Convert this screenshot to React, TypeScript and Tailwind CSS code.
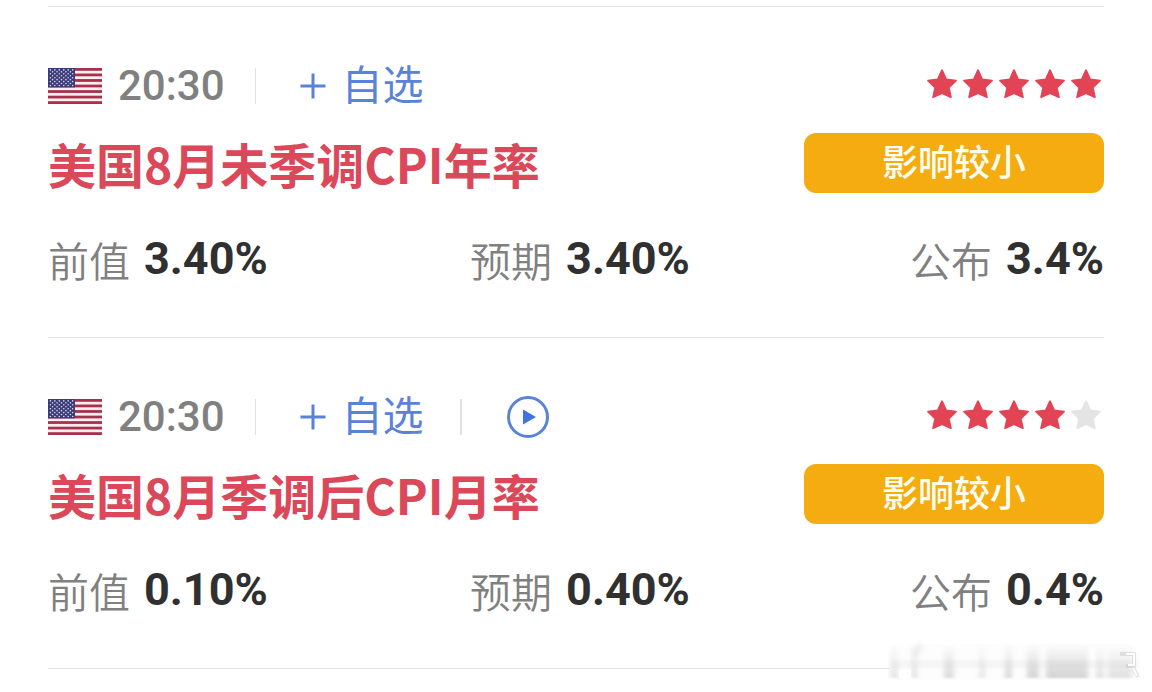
import clsx from "clsx";

type Indicator = {
  id: string;
  time: string;
  title: string;
  stars: number;
  impact: string;
  hasVideo: boolean;
  values: { label: string; value: string }[];
};

const INDICATORS: Indicator[] = [
  {
    id: "cpi-yoy",
    time: "20:30",
    title: "美国8月未季调CPI年率",
    stars: 5,
    impact: "影响较小",
    hasVideo: false,
    values: [
      { label: "前值", value: "3.40%" },
      { label: "预期", value: "3.40%" },
      { label: "公布", value: "3.4%" },
    ],
  },
  {
    id: "cpi-mom",
    time: "20:30",
    title: "美国8月季调后CPI月率",
    stars: 4,
    impact: "影响较小",
    hasVideo: true,
    values: [
      { label: "前值", value: "0.10%" },
      { label: "预期", value: "0.40%" },
      { label: "公布", value: "0.4%" },
    ],
  },
];

const MAX_STARS = 5;
const CELL_ALIGN = ["justify-start", "justify-center pl-2", "justify-end"];

const UsFlag = () => (
  <svg viewBox="0 0 54 36" className="h-9 w-[54px] shrink-0" aria-label="美国" role="img">
    <rect width="54" height="36" fill="#fbeef0" />
    {[0, 1, 2, 3, 4, 5, 6].map((i) => (
      <rect key={i} y={(i * 72) / 13} width="54" height={36 / 13} fill="#a5314b" />
    ))}
    <rect width="27" height="19.4" fill="#3a3b78" />
    {[0, 1, 2, 3, 4, 5, 6, 7, 8].map((row) =>
      Array.from({ length: row % 2 ? 5 : 6 }, (_, col) => (
        <circle
          key={`${row}-${col}`}
          cx={2.4 + col * 4.45 + (row % 2 ? 2.2 : 0)}
          cy={1.9 + row * 1.95}
          r="0.8"
          fill="#d5d8ee"
        />
      ))
    )}
  </svg>
);

const Star = ({ filled }: { filled: boolean }) => (
  <svg
    viewBox="0 0 36 36"
    className={clsx("size-9", filled ? "text-[#e24456]" : "text-[#e4e4e4]")}
    aria-hidden="true"
  >
    <path
      d="M18 4.2 22.2 13.3 32 14.6 24.8 21.6 26.9 31.2 18 27.1 9.1 31.2 11.2 21.6 4 14.6 13.8 13.3Z"
      fill="currentColor"
      stroke="currentColor"
      strokeWidth="1.8"
      strokeLinejoin="round"
    />
  </svg>
);

const IndicatorRow = ({ item }: { item: Indicator }) => (
  <article className="border-t border-[#e3e3e3] pt-[55px] pb-12">
    <div className="flex h-12 items-center justify-between">
      <div className="flex items-center">
        <UsFlag />
        <time className="ml-4 font-[Roboto,sans-serif] text-[42px] leading-[48px] font-medium text-[#808080]">
          {item.time}
        </time>
        <span className="ml-[30px] h-9 w-px bg-[#e0e0e0]" />
        <button type="button" className="ml-11 flex items-center gap-4 text-[#5b82d9]">
          <svg viewBox="0 0 26 26" className="size-[26px]" aria-hidden="true">
            <path d="M13 0.5v25M0.5 13h25" stroke="currentColor" strokeWidth="3" />
          </svg>
          <span className="pb-2 text-[41px] leading-[40px]">自选</span>
        </button>
        {item.hasVideo && (
          <>
            <span className="ml-9 h-9 w-0.5 bg-[#e0e0e0]" />
            <button type="button" aria-label="播放" className="ml-11 text-[#5b82d9]">
              <svg viewBox="0 0 44 44" className="size-11" aria-hidden="true">
                <circle cx="22" cy="22" r="19.5" fill="none" stroke="currentColor" strokeWidth="3" />
                <path d="M17 14.5v15L30 22Z" fill="#4472dc" />
              </svg>
            </button>
          </>
        )}
      </div>
      <div className="flex pb-1" role="img" aria-label={`${item.stars}/${MAX_STARS}`}>
        {Array.from({ length: MAX_STARS }, (_, i) => (
          <Star key={i} filled={i < item.stars} />
        ))}
      </div>
    </div>

    <div className="mt-[23px] flex items-center justify-between">
      <h2 className="text-[48px] leading-[60px] font-bold text-[#da485a]">{item.title}</h2>
      <span className="flex h-[60px] w-[300px] justify-center rounded-xl bg-[#f4ac10] text-[36px] leading-[54px] font-medium text-[#fffdf0]">
        {item.impact}
      </span>
    </div>

    <dl className="mt-9 grid grid-cols-3">
      {item.values.map(({ label, value }, i) => (
        <div key={label} className={clsx("flex h-[60px] items-center gap-3.5", CELL_ALIGN[i])}>
          <dt className="text-[41px] leading-[60px] font-[350] text-[#808080]">{label}</dt>
          <dd className="font-[Roboto,sans-serif] text-[45px] leading-[60px] font-bold text-[#303030]">
            {value}
          </dd>
        </div>
      ))}
    </dl>
  </article>
);

// Smeared source mark in the bottom corner
const SMEARS = [
  { x: 2, w: 8, o: 0.14 },
  { x: 24, w: 5, o: 0.18 },
  { x: 56, w: 10, o: 0.2 },
  { x: 91, w: 6, o: 0.14 },
  { x: 117, w: 7, o: 0.22 },
  { x: 139, w: 12, o: 0.24 },
  { x: 158, w: 42, o: 0.24 },
  { x: 208, w: 8, o: 0.16 },
  { x: 220, w: 24, o: 0.16 },
];

const SourceMark = () => (
  <svg
    viewBox="0 0 264 48"
    className="absolute right-0 bottom-2 h-12 w-[264px]"
    aria-hidden="true"
  >
    <defs>
      <linearGradient id="smear" x1="0" y1="0" x2="0" y2="1">
        <stop offset="0" stopColor="#888" stopOpacity="0" />
        <stop offset="1" stopColor="#888" />
      </linearGradient>
      <filter id="soften" x="-10%" y="-20%" width="120%" height="140%">
        <feGaussianBlur stdDeviation="2.6 1" />
      </filter>
    </defs>
    <rect x="1" y="8" width="250" height="36" rx="14" fill="#fdfdfd" />
    <g filter="url(#soften)">
      <rect x="4" y="24" width="245" height="8" fill="#777" opacity="0.05" />
      <path d="M24 14 34 4v10L27 24Z" fill="#777" opacity="0.1" />
      {SMEARS.map(({ x, w, o }) => (
        <rect key={x} x={x} y="8" width={w} height="34" fill="url(#smear)" opacity={o * 1.5} />
      ))}
    </g>
    <rect x="11" y="34" width="12" height="8" rx="1" fill="#fff" />
    <path d="M232 18h14v12h-8M245 32l5 9" fill="none" stroke="#bbb" strokeWidth="4" opacity="0.4" />
    <path d="M238 18h8v11h-6M245 32l4 8" fill="none" stroke="#fff" strokeWidth="2" />
  </svg>
);

const App = () => (
  <main className="relative bg-white px-12 pt-1.5 pb-[23px] font-['Noto_Sans_CJK_SC',sans-serif]" lang="zh-CN">
    {INDICATORS.map((item) => (
      <IndicatorRow key={item.id} item={item} />
    ))}
    <hr className="border-t border-[#e3e3e3]" />
    <SourceMark />
  </main>
);

export default App;
